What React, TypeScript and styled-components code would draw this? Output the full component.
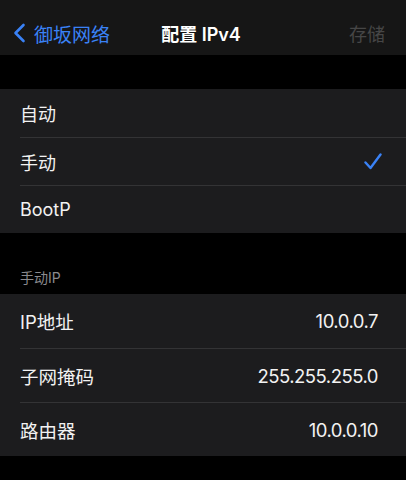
import React from "react";
import styled, { createGlobalStyle } from "styled-components";

type Row = {
  label: string;
  value?: string;
  checked?: boolean;
};

const modes: Row[] = [
  { label: "自动" },
  { label: "手动", checked: true },
  { label: "BootP" },
];

const manual: Row[] = [
  { label: "IP地址", value: "10.0.0.7" },
  { label: "子网掩码", value: "255.255.255.0" },
  { label: "路由器", value: "10.0.0.10" },
];

const ChevronLeft = () => (
  <svg width="13" height="20" viewBox="0 0 13 20" fill="none">
    <path
      d="M10.5 2 L2.5 10 L10.5 18"
      stroke="#3a82f6"
      strokeWidth="2.6"
      strokeLinecap="round"
      strokeLinejoin="round"
    />
  </svg>
);

const Check = () => (
  <svg width="18" height="17" viewBox="0 0 18 17" fill="none">
    <path
      d="M1.5 9.5 L6.5 15 L16.5 1.5"
      stroke="#3a82f6"
      strokeWidth="2.4"
      strokeLinecap="round"
      strokeLinejoin="round"
    />
  </svg>
);

const App = () => {
  return (
    <>
      <GlobalStyle />
      <Screen>
        <NavBar>
          <BackButton>
            <ChevronLeft />
            <span>御坂网络</span>
          </BackButton>
          <Title>配置 IPv4</Title>
          <SaveButton>存储</SaveButton>
        </NavBar>

        <Spacer $height={34} />
        <Group>
          {modes.map((row) => (
            <Cell key={row.label} $height={48}>
              <Label>{row.label}</Label>
              {row.checked && <Check />}
            </Cell>
          ))}
        </Group>

        <SectionHeader>手动IP</SectionHeader>
        <Group>
          {manual.map((row) => (
            <Cell key={row.label} $height={54}>
              <Label $large>{row.label}</Label>
              <Value>{row.value}</Value>
            </Cell>
          ))}
        </Group>
      </Screen>
    </>
  );
};
export default App;

const GlobalStyle = createGlobalStyle`
  html, body {
    margin: 0;
    padding: 0;
    background: #000;
  }
  body {
    font-family: Inter, "Noto Sans CJK SC", sans-serif;
    -webkit-font-smoothing: antialiased;
  }
`;

const Screen = styled.div`
  width: 406px;
  height: 480px;
  background: #000;
  overflow: hidden;
  display: flex;
  flex-direction: column;
`;

const NavBar = styled.div`
  height: 55px;
  box-sizing: border-box;
  background: #161616;
  display: grid;
  grid-template-columns: 1fr auto 1fr;
  align-items: center;
  padding: 11px 21px 0 13px;
  flex-shrink: 0;
`;

const BackButton = styled.div`
  display: flex;
  align-items: center;
  gap: 8px;
  color: #3a82f6;
  font-size: 19px;
  justify-self: start;
`;

const Title = styled.div`
  color: #fff;
  font-size: 18px;
  font-weight: 600;
  margin-left: 4px;
`;

const SaveButton = styled.div`
  justify-self: end;
  color: #464646;
  font-size: 18px;
`;

const Spacer = styled.div<{ $height: number }>`
  height: ${({ $height }) => $height}px;
  flex-shrink: 0;
`;

const Group = styled.div`
  background: #1c1c1e;
  padding-left: 20px;
  flex-shrink: 0;
`;

const Cell = styled.div<{ $height: number }>`
  height: ${({ $height }) => $height}px;
  display: flex;
  align-items: center;
  justify-content: space-between;
  padding-right: 24px;
  box-sizing: border-box;
  & + & {
    border-top: 1px solid #333335;
  }
`;

const Label = styled.span<{ $large?: boolean }>`
  color: #f2f2f2;
  font-size: ${({ $large }) => ($large ? "18.5px" : "18px")};
`;

const Value = styled.span`
  color: #f2f2f2;
  font-size: 18.5px;
  letter-spacing: -0.5px;
  margin-right: 4px;
`;

const SectionHeader = styled.div`
  height: 61px;
  box-sizing: border-box;
  padding: 34px 0 0 20px;
  color: #8a8a8e;
  font-size: 14px;
  flex-shrink: 0;
`;
